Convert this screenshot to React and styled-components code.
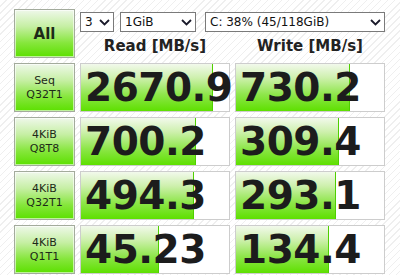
import styled, { createGlobalStyle } from "styled-components"

const Global = createGlobalStyle`
  html, body {
    margin: 0;
    padding: 0;
    background: #fff;
  }
  body {
    font-family: "DejaVu Sans", Tahoma, sans-serif;
  }
`

const Window = styled.div`
  width: 400px;
  height: 275px;
  box-sizing: border-box;
  padding: 9px 0 0 14px;
  overflow: hidden;
  background: repeating-linear-gradient(135deg, #ffffff 0 4px, #efefef 4px 5px);
  display: flex;
  flex-direction: column;
  gap: 5px;
`

const Row = styled.div`
  display: grid;
  grid-template-columns: 61px 150px 150px;
  column-gap: 5px;
  height: 49px;
`

const GreenButton = styled.div`
  box-sizing: border-box;
  border: 1px solid #a3ab9c;
  background: linear-gradient(#eff8ea 0%, #c6efa4 35%, #86e63c 70%, #5ce000 100%);
  box-shadow: inset 0 0 0 1px rgba(255, 255, 255, 0.6);
  display: flex;
  flex-direction: column;
  align-items: center;
  justify-content: center;
  color: #1d2a18;
  text-align: center;
`

const AllButton = styled(GreenButton)`
  font-weight: bold;
  font-size: 15px;
`

const TestLabel = styled(GreenButton)`
  font-size: 11px;
  line-height: 14px;
`

const Controls = styled.div`
  grid-column: 2 / 4;
  display: flex;
  flex-direction: column;
`

const Selects = styled.div`
  display: flex;
  margin-top: 3px;
  height: 20px;
`

const Select = styled.div`
  box-sizing: border-box;
  width: ${(p) => p.$w}px;
  margin-right: ${(p) => p.$gap || 0}px;
  height: 20px;
  border: 1px solid #7a7a7a;
  background: #fff;
  display: flex;
  align-items: center;
  justify-content: space-between;
  padding: 0 3px 0 4px;
  font-size: 12px;
  color: #111;
`

const Headers = styled.div`
  display: grid;
  grid-template-columns: 150px 150px;
  column-gap: 5px;
  margin-top: 4px;
`

const Header = styled.div`
  text-align: center;
  font-weight: bold;
  font-size: 15px;
  color: #222;
  line-height: 20px;
`

const Cell = styled.div`
  position: relative;
  box-sizing: border-box;
  border: 1px solid #cdcdcd;
  background: #fff;
  overflow: visible;
  display: flex;
  align-items: center;
`

const Bar = styled.div`
  position: absolute;
  left: 0;
  top: 0;
  bottom: 0;
  background: linear-gradient(#f2f9ec 0%, #cdf0ac 30%, #8ee64a 65%, #5ee000 100%);
  border-right: 1px solid #4fcf00;
`

const Value = styled.span`
  position: relative;
  padding-left: 4px;
  font-size: 39px;
  font-weight: bold;
  color: #1c1c1c;
  letter-spacing: -0.5px;
  white-space: nowrap;
`

function Chevron() {
  return (
    <svg width="11" height="7" viewBox="0 0 11 7">
      <path d="M1 1 L5.5 5.5 L10 1" fill="none" stroke="#1a1a2a" strokeWidth="1.8" />
    </svg>
  )
}

const rows = [
  { a: "Seq", b: "Q32T1", read: "2670.9", rw: 131, write: "730.2", ww: 113 },
  { a: "4KiB", b: "Q8T8", read: "700.2", rw: 114, write: "309.4", ww: 102 },
  { a: "4KiB", b: "Q32T1", read: "494.3", rw: 112, write: "293.1", ww: 99 },
  { a: "4KiB", b: "Q1T1", read: "45.23", rw: 77, write: "134.4", ww: 92 },
]

export default function App() {
  return (
    <>
      <Global />
      <Window>
        <Row>
          <AllButton>All</AllButton>
          <Controls>
            <Selects>
              <Select $w={34} $gap={6}>3<Chevron /></Select>
              <Select $w={76} $gap={9}>1GiB<Chevron /></Select>
              <Select $w={180}>C: 38% (45/118GiB)<Chevron /></Select>
            </Selects>
            <Headers>
              <Header>Read [MB/s]</Header>
              <Header>Write [MB/s]</Header>
            </Headers>
          </Controls>
        </Row>
        {rows.map((r, i) => (
          <Row key={i}>
            <TestLabel>
              <div>{r.a}</div>
              <div>{r.b}</div>
            </TestLabel>
            <Cell>
              <Bar style={{ width: r.rw }} />
              <Value>{r.read}</Value>
            </Cell>
            <Cell>
              <Bar style={{ width: r.ww }} />
              <Value>{r.write}</Value>
            </Cell>
          </Row>
        ))}
      </Window>
    </>
  )
}
